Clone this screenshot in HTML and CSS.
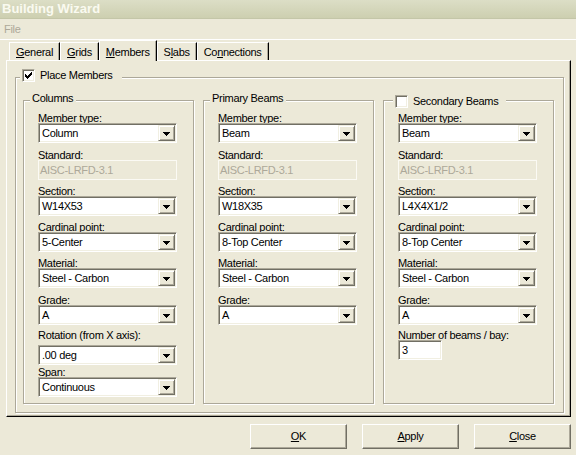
FILE: index.html
```html
<!DOCTYPE html>
<html>
<head>
<meta charset="utf-8">
<title>Building Wizard</title>
<link rel="stylesheet" href="styles.css">
</head>
<body>
<div class="titlebar">Building Wizard</div>
<div class="menubar"><span class="menu-item">File</span></div>
<div class="tabstrip">
  <div class="tab"><u>G</u>eneral</div>
  <div class="tab"><u>G</u>rids</div>
  <div class="tab active"><u>M</u>embers</div>
  <div class="tab">S<u>l</u>abs</div>
  <div class="tab">Co<u>n</u>nections</div>
</div>
<div class="panel">
  <div class="group outer">
    <div class="legend chk-legend">
      <span class="checkbox"><svg width="11" height="11" viewBox="0 0 11 11"><path d="M2 4 L2 7 L4 9 L9 4 L9 1 L4 6 Z" fill="#000"/></svg></span>
      <span>Place Members</span>
    </div>
    <div class="columns">
      <div class="group col">
        <div class="legend text-legend">Columns</div>
        <div class="field f-first"><div class="label">Member type:</div><div class="combo"><span class="value">Column</span><span class="drop"><svg width="7" height="4" viewBox="0 0 7 4"><path d="M0 0h7v1h-1v1h-1v1h-1v1h-1v-1h-1v-1h-1v-1h-1z" fill="#000"/></svg></span></div></div>
        <div class="field f-plus"><div class="label">Standard:</div><div class="disabled-box">AISC-LRFD-3.1</div></div>
        <div class="field"><div class="label">Section:</div><div class="combo"><span class="value">W14X53</span><span class="drop"><svg width="7" height="4" viewBox="0 0 7 4"><path d="M0 0h7v1h-1v1h-1v1h-1v1h-1v-1h-1v-1h-1v-1h-1z" fill="#000"/></svg></span></div></div>
        <div class="field"><div class="label">Cardinal point:</div><div class="combo"><span class="value">5-Center</span><span class="drop"><svg width="7" height="4" viewBox="0 0 7 4"><path d="M0 0h7v1h-1v1h-1v1h-1v1h-1v-1h-1v-1h-1v-1h-1z" fill="#000"/></svg></span></div></div>
        <div class="field"><div class="label">Material:</div><div class="combo"><span class="value">Steel - Carbon</span><span class="drop"><svg width="7" height="4" viewBox="0 0 7 4"><path d="M0 0h7v1h-1v1h-1v1h-1v1h-1v-1h-1v-1h-1v-1h-1z" fill="#000"/></svg></span></div></div>
        <div class="field f-plus"><div class="label">Grade:</div><div class="combo"><span class="value">A</span><span class="drop"><svg width="7" height="4" viewBox="0 0 7 4"><path d="M0 0h7v1h-1v1h-1v1h-1v1h-1v-1h-1v-1h-1v-1h-1z" fill="#000"/></svg></span></div></div>
        <div class="field f-rot"><div class="label">Rotation (from X axis):</div><div class="combo"><span class="value">.00 deg</span><span class="drop"><svg width="7" height="4" viewBox="0 0 7 4"><path d="M0 0h7v1h-1v1h-1v1h-1v1h-1v-1h-1v-1h-1v-1h-1z" fill="#000"/></svg></span></div></div>
        <div class="field f-span"><div class="label">Span:</div><div class="combo"><span class="value">Continuous</span><span class="drop"><svg width="7" height="4" viewBox="0 0 7 4"><path d="M0 0h7v1h-1v1h-1v1h-1v1h-1v-1h-1v-1h-1v-1h-1z" fill="#000"/></svg></span></div></div>
      </div>
      <div class="group col">
        <div class="legend text-legend">Primary Beams</div>
        <div class="field f-first"><div class="label">Member type:</div><div class="combo"><span class="value">Beam</span><span class="drop"><svg width="7" height="4" viewBox="0 0 7 4"><path d="M0 0h7v1h-1v1h-1v1h-1v1h-1v-1h-1v-1h-1v-1h-1z" fill="#000"/></svg></span></div></div>
        <div class="field f-plus"><div class="label">Standard:</div><div class="disabled-box">AISC-LRFD-3.1</div></div>
        <div class="field"><div class="label">Section:</div><div class="combo"><span class="value">W18X35</span><span class="drop"><svg width="7" height="4" viewBox="0 0 7 4"><path d="M0 0h7v1h-1v1h-1v1h-1v1h-1v-1h-1v-1h-1v-1h-1z" fill="#000"/></svg></span></div></div>
        <div class="field"><div class="label">Cardinal point:</div><div class="combo"><span class="value">8-Top Center</span><span class="drop"><svg width="7" height="4" viewBox="0 0 7 4"><path d="M0 0h7v1h-1v1h-1v1h-1v1h-1v-1h-1v-1h-1v-1h-1z" fill="#000"/></svg></span></div></div>
        <div class="field"><div class="label">Material:</div><div class="combo"><span class="value">Steel - Carbon</span><span class="drop"><svg width="7" height="4" viewBox="0 0 7 4"><path d="M0 0h7v1h-1v1h-1v1h-1v1h-1v-1h-1v-1h-1v-1h-1z" fill="#000"/></svg></span></div></div>
        <div class="field f-plus"><div class="label">Grade:</div><div class="combo"><span class="value">A</span><span class="drop"><svg width="7" height="4" viewBox="0 0 7 4"><path d="M0 0h7v1h-1v1h-1v1h-1v1h-1v-1h-1v-1h-1v-1h-1z" fill="#000"/></svg></span></div></div>
      </div>
      <div class="group col">
        <div class="legend chk-legend col-chk">
          <span class="checkbox"></span>
          <span>Secondary Beams</span>
        </div>
        <div class="field f-first"><div class="label">Member type:</div><div class="combo"><span class="value">Beam</span><span class="drop"><svg width="7" height="4" viewBox="0 0 7 4"><path d="M0 0h7v1h-1v1h-1v1h-1v1h-1v-1h-1v-1h-1v-1h-1z" fill="#000"/></svg></span></div></div>
        <div class="field f-plus"><div class="label">Standard:</div><div class="disabled-box">AISC-LRFD-3.1</div></div>
        <div class="field"><div class="label">Section:</div><div class="combo"><span class="value">L4X4X1/2</span><span class="drop"><svg width="7" height="4" viewBox="0 0 7 4"><path d="M0 0h7v1h-1v1h-1v1h-1v1h-1v-1h-1v-1h-1v-1h-1z" fill="#000"/></svg></span></div></div>
        <div class="field"><div class="label">Cardinal point:</div><div class="combo"><span class="value">8-Top Center</span><span class="drop"><svg width="7" height="4" viewBox="0 0 7 4"><path d="M0 0h7v1h-1v1h-1v1h-1v1h-1v-1h-1v-1h-1v-1h-1z" fill="#000"/></svg></span></div></div>
        <div class="field"><div class="label">Material:</div><div class="combo"><span class="value">Steel - Carbon</span><span class="drop"><svg width="7" height="4" viewBox="0 0 7 4"><path d="M0 0h7v1h-1v1h-1v1h-1v1h-1v-1h-1v-1h-1v-1h-1z" fill="#000"/></svg></span></div></div>
        <div class="field f-plus"><div class="label">Grade:</div><div class="combo"><span class="value">A</span><span class="drop"><svg width="7" height="4" viewBox="0 0 7 4"><path d="M0 0h7v1h-1v1h-1v1h-1v1h-1v-1h-1v-1h-1v-1h-1z" fill="#000"/></svg></span></div></div>
        <div class="field f-num"><div class="label">Number of beams / bay:</div><div class="numbox">3</div></div>
      </div>
    </div>
  </div>
</div>
<div class="buttons">
  <div class="btn"><span><u>O</u>K</span></div>
  <div class="btn"><span><u>A</u>pply</span></div>
  <div class="btn"><span><u>C</u>lose</span></div>
</div>
</body>
</html>
```
FILE: styles.css
```css
* { box-sizing: border-box; }
html, body { margin: 0; padding: 0; }
body {
  width: 576px;
  height: 455px;
  overflow: hidden;
  background: #ece9d8;
  font-family: "Liberation Sans", Arial, sans-serif;
  font-size: 11px;
  letter-spacing: -0.3px;
  color: #000;
}
svg { display: block; shape-rendering: crispEdges; }

.titlebar {
  height: 19px;
  line-height: 18px;
  padding-left: 2px;
  font-size: 13px;
  font-weight: bold;
  letter-spacing: 0;
  color: #fafaf0;
  background: linear-gradient(#dcdec6, #cdcfb0);
  border-bottom: 1px solid #c4c6a8;
}
.menubar {
  height: 21px;
  display: flex;
  align-items: center;
  padding-left: 4px;
  color: #aca899;
  border-bottom: 1px solid #fff;
}
.tabstrip {
  height: 20px;
  display: flex;
  align-items: flex-end;
  padding-left: 9px;
}
.tab {
  height: 18px;
  padding: 3px 6px 0;
  line-height: 13px;
  border: 1px solid;
  border-bottom: 0;
  border-color: #fff #000 transparent #fff;
  box-shadow: inset -1px 0 #aca899;
  white-space: nowrap;
}
.tab.active {
  height: 21px;
  padding-top: 5px;
  margin-bottom: -1px;
  position: relative;
  z-index: 1;
  background: #ece9d8;
}

.panel {
  margin-left: 6px;
  width: 565px;
  height: 357px;
  border: 1px solid;
  border-color: #fff #000 #000 #fff;
  box-shadow: inset -1px -1px #aca899;
  padding: 16px 0 0 8px;
}

.group {
  border: 1px solid #aca899;
  box-shadow: inset 1px 1px #fff, 1px 1px #fff;
  display: flex;
  flex-direction: column;
}
.outer { width: 549px; height: 336px; }

.legend {
  align-self: flex-start;
  display: flex;
  align-items: center;
  height: 13px;
  line-height: 13px;
  background: #ece9d8;
  white-space: nowrap;
}
.chk-legend { gap: 5px; }
.outer > .legend { margin: -9px 0 0 4px; padding: 0 9px 0 2px; }
.text-legend { margin: -9px 0 7px -8px; padding: 0 3px 0 2px; }
.col-chk { margin: -6px 0 4px -5px; padding: 0 8px 0 2px; }

.checkbox {
  flex: none;
  width: 13px;
  height: 13px;
  background: #fff;
  border: 1px solid;
  border-color: #aca899 #fff #fff #aca899;
  box-shadow: inset 1px 1px #716f64, inset -1px -1px #f1efe2;
}

.columns {
  display: flex;
  gap: 9px;
  margin: 18px 0 0 7px;
}
.col {
  width: 171px;
  height: 304px;
  padding-left: 14px;
}

.field { display: flex; flex-direction: column; margin-top: 5px; }
.field.f-first { margin-top: 0; }
.field.f-plus { margin-top: 6px; }
.field.f-rot { margin-top: 4px; }
.field.f-rot .label { margin-bottom: 3px; }
.field.f-span { margin-top: 1px; }
.field.f-num { margin-top: 4px; }
.label { line-height: 13px; margin-bottom: -2px; white-space: nowrap; }

.combo {
  width: 139px;
  height: 20px;
  padding: 1px;
  background: #fff;
  border: 1px solid;
  border-color: #aca899 #fff #fff #aca899;
  box-shadow: inset 1px 1px #716f64, inset -1px -1px #f1efe2;
  display: flex;
  align-items: center;
}
.value { flex: 1; padding-left: 2px; line-height: 13px; white-space: nowrap; }
.drop {
  flex: none;
  width: 17px;
  height: 16px;
  background: #ece9d8;
  border: 1px solid;
  border-color: #f1efe2 #716f64 #716f64 #f1efe2;
  box-shadow: inset 1px 1px #fff, inset -1px -1px #aca899;
  display: flex;
  align-items: center;
  justify-content: center;
  padding-top: 1px;
}
.disabled-box {
  width: 139px;
  height: 20px;
  border: 1px solid #fbfaf4;
  background: #ece9d8;
  color: #aca899;
  padding-left: 1px;
  display: flex;
  align-items: center;
  line-height: 13px;
}
.numbox {
  width: 44px;
  height: 20px;
  padding-left: 3px;
  background: #fff;
  border: 1px solid;
  border-color: #aca899 #fff #fff #aca899;
  box-shadow: inset 1px 1px #716f64, inset -1px -1px #f1efe2;
  display: flex;
  align-items: center;
  line-height: 13px;
}

.buttons {
  display: flex;
  justify-content: flex-end;
  gap: 15px;
  margin-top: 7px;
  padding-right: 5px;
}
.btn {
  width: 97px;
  height: 25px;
  display: flex;
  align-items: center;
  justify-content: center;
  line-height: 13px;
  border: 1px solid;
  border-color: #fff #716f64 #716f64 #fff;
  box-shadow: inset -1px -1px #aca899;
}
```
